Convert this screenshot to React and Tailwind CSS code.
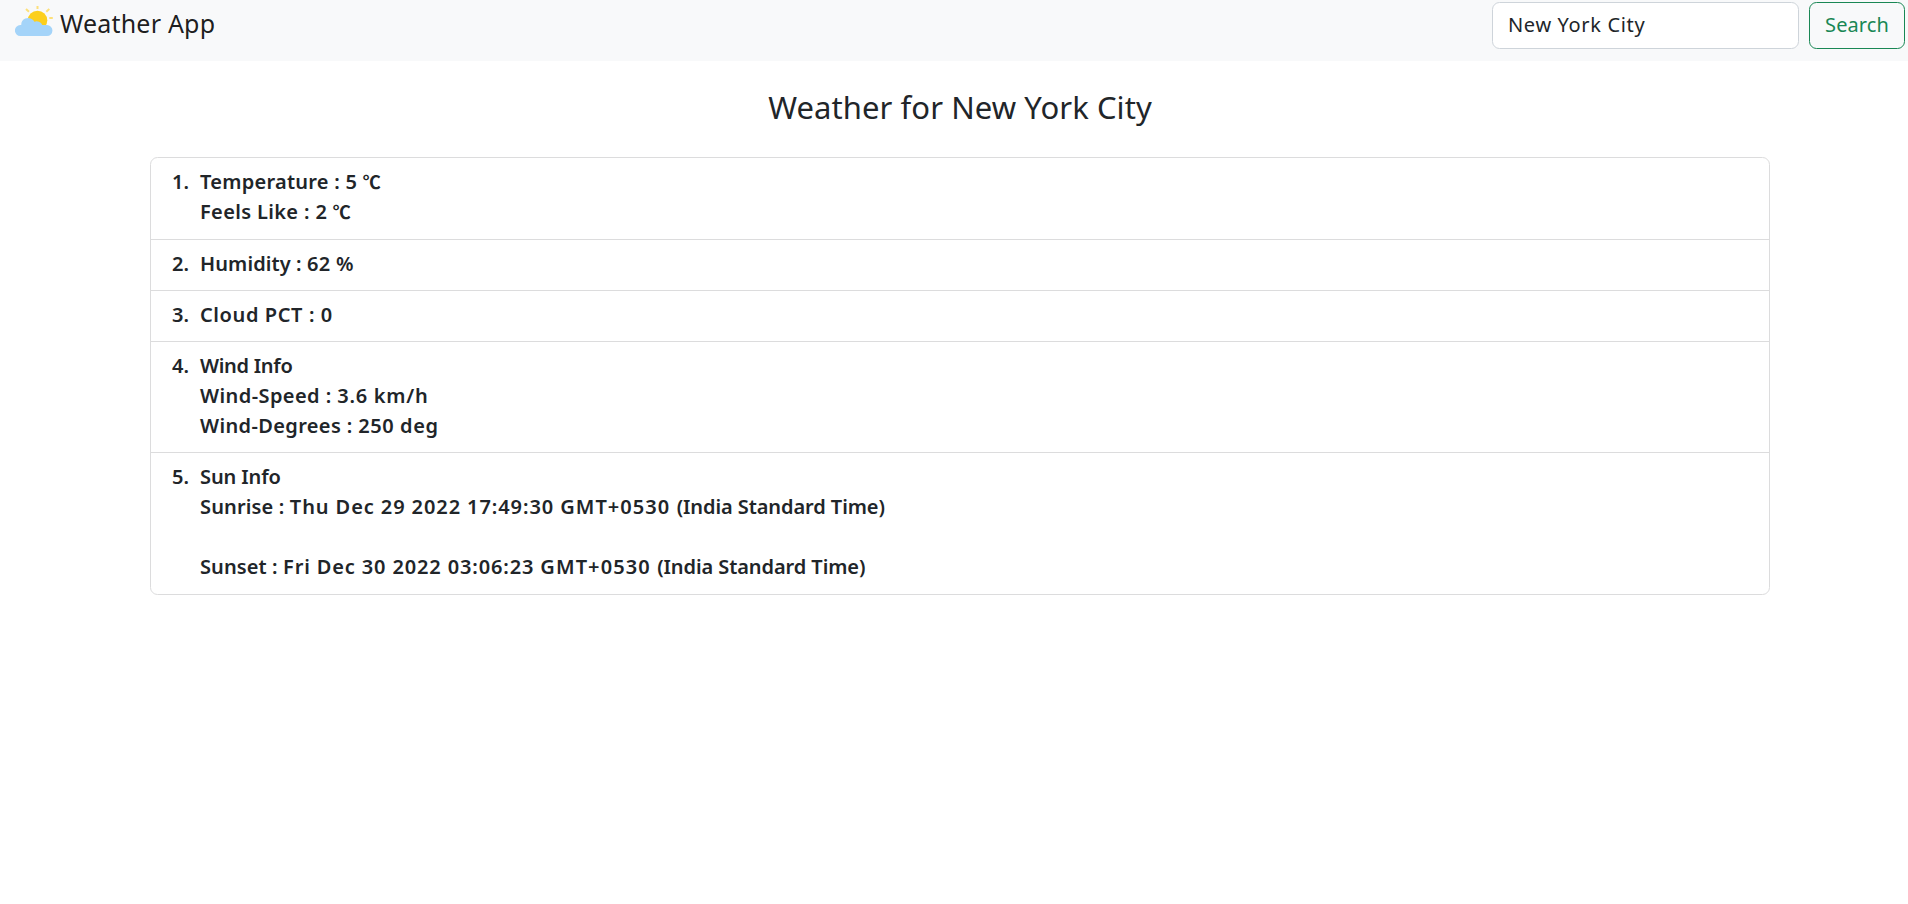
import React from 'react';

const items = [
  {
    size: 'h-[82px]',
    lines: [
      [
        ['Temperature : 5 ', 'tracking-[0.26px]'],
        ['℃', "font-['Noto_Sans_CJK_SC',sans-serif] text-[18px] leading-none"],
      ],
      [
        ['Feels Like : 2 ', 'tracking-[0.35px]'],
        ['℃', "font-['Noto_Sans_CJK_SC',sans-serif] text-[18px] leading-none"],
      ],
    ],
  },
  { size: 'h-[51px]', lines: [[['Humidity : ', 'tracking-[0.1px]'], ['62 %', 'tracking-[0.3px]']]] },
  { size: 'h-[51px]', lines: [[['Cloud PCT : 0', 'tracking-[0.6px]']]] },
  {
    size: 'h-[111px]',
    lines: [
      [['Wind Info', 'tracking-[-0.3px]']],
      [['Wind-Speed : ', 'tracking-[0.42px]'], ['3.6 km/h', 'tracking-[0.75px]']],
      [['Wind-Degrees : ', 'tracking-[0.36px]'], ['250 deg', 'tracking-[0.6px]']],
    ],
  },
  {
    size: 'h-[141px]',
    lines: [
      [['Sun Info', 'tracking-[-0.1px]']],
      [
        ['Sunrise : ', 'tracking-[0.15px]'],
        ['Thu Dec 29 2022 17:49:30 ', 'tracking-[0.91px]'],
        ['GMT+0530 ', 'tracking-[1.06px]'],
        ['(India Standard Time)', 'tracking-[-0.08px]'],
      ],
      [['\u00a0', 'tracking-[0px]']],
      [
        ['Sunset : ', 'tracking-[0.1px]'],
        ['Fri Dec 30 2022 03:06:23 ', 'tracking-[0.86px]'],
        ['GMT+0530 ', 'tracking-[1.1px]'],
        ['(India Standard Time)', 'tracking-[-0.08px]'],
      ],
    ],
  },
];

function WeatherIcon() {
  return (
    <svg viewBox="15 6 38 30" className="h-[30px] w-[38px] shrink-0" aria-hidden="true">
      <g stroke="#fde07a" strokeWidth="2" fill="none">
        <path d="M37.5 6v3M26 9l3 2.8M49.3 9l-3 2.8M49.3 18h3.5" />
      </g>
      <circle cx="37.5" cy="20.5" r="9.8" fill="#fccf1c" />
      <path
        fill="#a4d4f9"
        d="M20.5 36a5.5 5.5 0 0 1-.2-11h.9a7 7 0 0 1 11.6-5.3 5 5 0 0 1 1.6 2.1 6 6 0 0 1 7.9 3.3h4.7a5.45 5.45 0 0 1 0 10.9z"
      />
    </svg>
  );
}

export default function App() {
  return (
    <div className="min-h-[904px] overflow-x-hidden bg-white font-['Noto_Sans','Noto_Sans_CJK_SC',sans-serif] text-[20px] leading-[30px] text-[#212529]">
      <nav className="flex h-[61px] items-start justify-between bg-[#f8f9fa] pr-[3px] pl-[15px]">
        <a href="#" className="flex items-start pt-[6px] text-[25px] text-black/90">
          <WeatherIcon />
          <span className="-mt-[1px] ml-[7px] leading-[36px] tracking-[0.2px]">Weather App</span>
        </a>
        <form className="flex gap-[10px] pt-[2px]">
          <input
            type="text"
            defaultValue="New York City"
            className="h-[47px] w-[307px] rounded-[7.5px] border border-[#ced4da] bg-white px-[15px] pb-[2px] tracking-[0.65px] outline-none"
          />
          <button
            type="button"
            className="h-[47px] w-[96px] rounded-[7.5px] border border-[#198754] pb-[2px] tracking-[0.1px] text-[#198754]"
          >
            Search
          </button>
        </form>
      </nav>
      <main className="ml-[150px] w-[1620px]">
        <h1 className="pt-[27px] text-center text-[31px] leading-[38px] tracking-[0.08px]">
          Weather for New York City
        </h1>
        <ol className="mt-[31px] rounded-[7.5px] border border-[#dcdcdd] font-semibold">
          {items.map((item, i) => (
            <li
              key={i}
              className={`flex border-[#dcdcdd] pt-[9px] pl-[21px] not-last:border-b ${item.size}`}
            >
              <span className="w-[28px]">{i + 1}.</span>
              <div>
                {item.lines.map((line, j) => (
                  <div key={j} className="h-[30px] whitespace-pre">
                    {line.map(([text, style], k) => (
                      <span key={k} className={style}>
                        {text}
                      </span>
                    ))}
                  </div>
                ))}
              </div>
            </li>
          ))}
        </ol>
      </main>
    </div>
  );
}
